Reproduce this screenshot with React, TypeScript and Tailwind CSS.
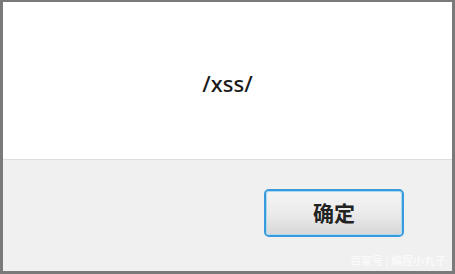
import React from "react";

const App = () => {
  return (
    <div className="w-[455px] h-[274px] bg-[#7a7a7a] pl-[3px] pr-[3px] pt-[2px] pb-[3px]">
      <div className="relative flex flex-col w-full h-full bg-white font-['Noto_Sans','Noto_Sans_CJK_SC',sans-serif]">
        <div className="h-[158px] flex items-center justify-center border-b border-[#dedede]">
          <span className="text-[22px] font-medium text-[#1a1a1a] mt-[6px]">/xss/</span>
        </div>
        <div className="flex-1 bg-[#f0f0f0] flex justify-end items-start pt-[29px] pr-[48px]">
          <button className="w-[140px] h-[48px] rounded-[5px] border-2 border-[#3a9bdc] p-0">
            <div className="w-full h-full rounded-[3px] border border-[#a8d8f5] bg-gradient-to-b from-[#f4f4f4] via-[#ebebeb] to-[#d8d8d8] flex items-center justify-center">
              <span className="text-[21px] font-semibold text-[#222] font-['Noto_Sans_CJK_SC',sans-serif]">确定</span>
            </div>
          </button>
        </div>
        <div className="absolute right-[6px] bottom-[3px] text-[11px] text-white/80 font-['Noto_Sans_CJK_SC',sans-serif]">
          百家号 | 编程小丸子
        </div>
      </div>
    </div>
  );
};

export default App;
